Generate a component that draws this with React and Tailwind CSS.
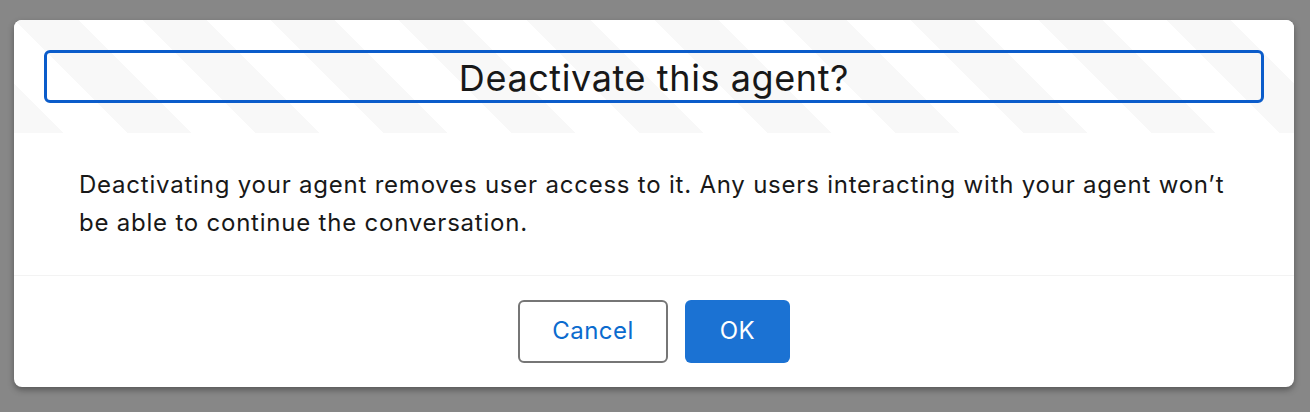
export default function App() {
  const stripes = {
    backgroundImage:
      "linear-gradient(45deg, rgba(0,0,0,0.027) 25%, transparent 25%, transparent 50%, rgba(0,0,0,0.027) 50%, rgba(0,0,0,0.027) 75%, transparent 75%, transparent)",
    backgroundSize: "128px 128px",
  };
  return (
    <div className="w-[1310px] h-[412px] bg-[#878787] pt-[20px] px-[14px] font-['Inter',sans-serif] text-[#181818]">
      <div className="w-[1280px] bg-white rounded-lg shadow-[0_3px_6px_rgba(0,0,0,0.35)] overflow-hidden">
        <div className="bg-white" style={stripes}>
          <div className="px-[30px] py-[30px]">
            <h1 className="h-[53px] border-[3px] border-[#0b5cca] rounded-[6px] flex items-center justify-center pt-[3px] text-[36px] leading-none tracking-[0.6px] font-normal">
              Deactivate this agent?
            </h1>
          </div>
        </div>
        <div className="h-[142px] px-[65px] flex items-center">
          <p className="text-[24px] leading-[37.5px] tracking-[0.78px] mt-[-1px]">
            Deactivating your agent removes user access to it. Any users interacting with your agent won’t be able to continue the conversation.
          </p>
        </div>
        <div className="border-t border-[#f3f3f3] h-[112px] flex items-center justify-center gap-[17px] pb-[1px]">
          <button className="w-[150px] h-[63px] border-2 border-[#767676] rounded-[6px] bg-white text-[#0b6bce] text-[24px] tracking-[0.5px]">
            Cancel
          </button>
          <button className="w-[105px] h-[63px] rounded-[6px] bg-[#1b72d3] text-white text-[24px] tracking-[0.5px]">
            OK
          </button>
        </div>
      </div>
    </div>
  );
}
